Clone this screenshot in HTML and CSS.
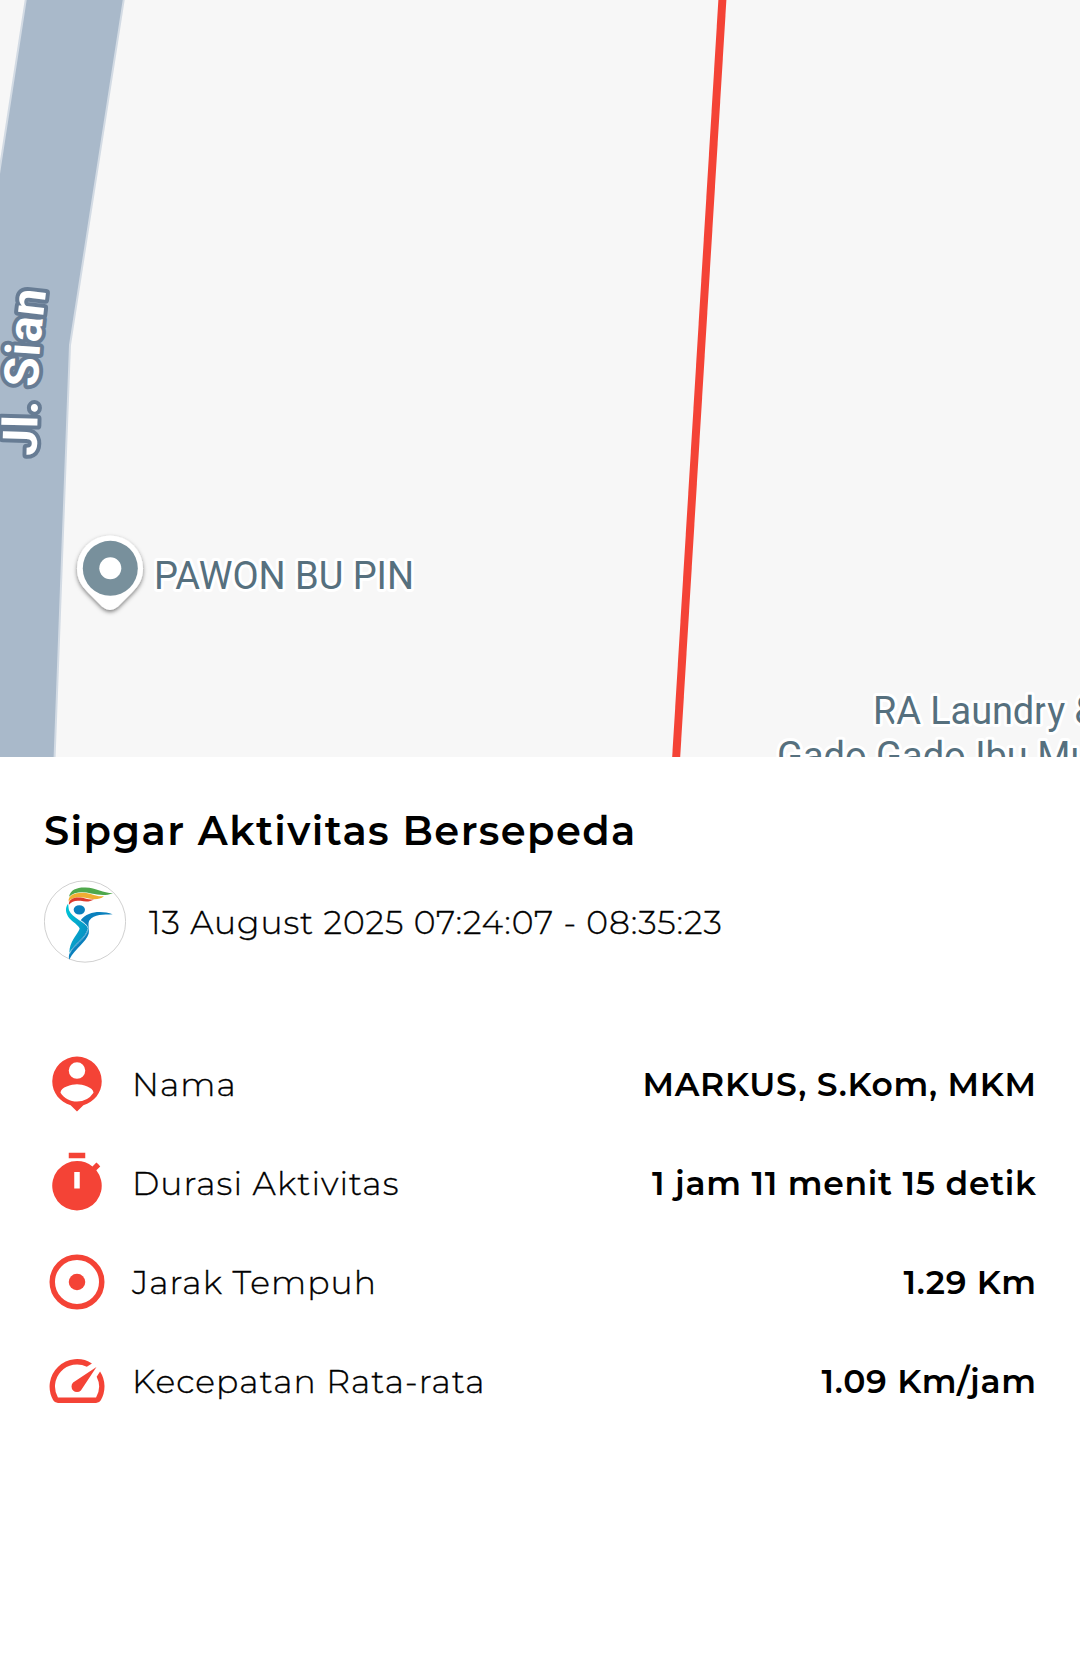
FILE: index.html
```html
<!DOCTYPE html>
<html lang="id">
  <head>
    <meta charset="UTF-8" />
    <meta name="viewport" content="width=device-width, initial-scale=1.0" />
    <title>Sipgar Aktivitas Bersepeda</title>
    <link rel="stylesheet" href="styles.css">
  </head>
  <body>
    <svg class="map" viewBox="0 0 1080 757">
      <defs>
        <path id="streetPath" d="M36.500 456 L38.500 375 Q39.500 345 43 318 L49 268" />
        <filter id="pinShadow" x="-20%" y="-20%" width="140%" height="150%">
          <feDropShadow dx="0" dy="2" stdDeviation="2" flood-opacity="0.5" />
        </filter>
      </defs>
      <path class="road" d="M26 -2 L-3 187 V760 H54.500 L70 345 L124 -2 Z" />
      <path class="route" d="M722.500 -2 L676 760" />
      <text class="street"><textPath href="#streetPath" textLength="166">Jl. Sian</textPath></text>
      <path class="pin" filter="url(#pinShadow)" d="M110 535.500a33 33 0 0 0-33 33c0 10 4 17 11 24l14 14q8 7 16 0l14-14c7-7 11-14 11-24a33 33 0 0 0-33-33z" />
      <circle class="pin-ring" cx="110.300" cy="568.300" r="27.500" />
      <circle class="pin" cx="110.300" cy="568.300" r="11" />
      <text class="place" x="154" y="588.500" textLength="260">PAWON BU PIN</text>
      <text class="place" x="873" y="723.500" textLength="225">RA Laundry &amp;</text>
      <text class="place" x="777" y="768.500">Gado Gado Ibu Mul</text>
    </svg>

    <div class="detail">
      <h1>Sipgar Aktivitas Bersepeda</h1>
      <div class="date-row">
        <svg class="logo" viewBox="27 29 246 248">
          <defs>
            <linearGradient id="bodyBlue" x1="0" y1="0" x2="1" y2="1">
              <stop offset="0" stop-color="#00c8d8" />
              <stop offset="1" stop-color="#0a80bd" />
            </linearGradient>
          </defs>
          <circle cx="150" cy="153" r="122" fill="#fff" stroke="#b0b0b0" stroke-width="1.800" />
          <path fill="#4fa84c" d="M102 79C106 57 128 50 151 51C185 52 203 68 234 68C209 77 192 73 169 69C143 63 117 64 102 79Z" />
          <path fill="#f0ae32" d="M101 93C99 74 121 66 145 67C172 69 182 80 207 77C190 90 172 86 151 82C130 78 110 80 101 93Z" />
          <path fill="#dc3a2d" d="M102 103C99 87 116 79 136 81C154 83 160 89 178 86C164 95 150 93 137 91C121 89 110 92 102 103Z" />
          <ellipse cx="133" cy="118" rx="17" ry="14" fill="#0a80bd" />
          <path fill="url(#bodyBlue)" d="M99 100C89 113 92 130 103 143C112 154 132 164 134 175C126 195 103 213 103 247C118 218 151 203 159 173C153 154 111 143 102 119C100 112 101 105 99 100Z" />
          <path fill="#0a80bd" d="M137 149C158 120 202 120 233 131C205 133 178 129 163 150C157 161 164 176 161 190C153 216 122 232 103 267C99 256 105 244 111 235C125 215 152 200 159 173C157 163 147 156 137 149Z" />
          <path fill="none" stroke="#c8eaf4" stroke-width="1.500" d="M104 250C112 225 154 207 160 174C158 165 147 156 139 150" />
        </svg>
        <span class="date">13 August 2025 07:24:07 - 08:35:23</span>
      </div>

      <ul class="stats">
        <li>
          <svg class="icon" viewBox="0 0 24 24">
            <path fill-rule="evenodd" d="M12 2a9 9 0 0 0-9 9c0 4.170 2.840 7.670 6.690 8.690L12 22l2.310-2.310C18.160 18.670 21 15.170 21 11a9 9 0 0 0-9-9zm0 2.130a3 3 0 1 1 0 6 3 3 0 0 1 0-6zM12 18.400c-2.500 0-4.700-1.280-6-3.220.03-2 4-3.080 6-3.080s5.970 1.090 6 3.080a7.200 7.200 0 0 1-6 3.220z" />
          </svg>
          <span class="label">Nama</span>
          <span class="value">MARKUS, S.Kom, MKM</span>
        </li>
        <li>
          <svg class="icon" viewBox="0 0 24 24">
            <path d="M9 1h6v2H9zM19.030 7.390l1.420-1.420c-.43-.51-.9-.99-1.410-1.410l-1.420 1.420A8.960 8.960 0 0 0 12 4a9 9 0 1 0 7.030 3.390zM13 14h-2V8h2v6z" />
          </svg>
          <span class="label">Durasi Aktivitas</span>
          <span class="value">1 jam 11 menit 15 detik</span>
        </li>
        <li>
          <svg class="icon" viewBox="0 0 24 24">
            <circle cx="12" cy="12" r="9" fill="none" stroke="#f44336" stroke-width="2" />
            <circle cx="12" cy="12" r="3" />
          </svg>
          <span class="label">Jarak Tempuh</span>
          <span class="value">1.29 Km</span>
        </li>
        <li>
          <svg class="icon" viewBox="0 0 24 24">
            <path d="M20.380 8.570l-1.230 1.850a8 8 0 0 1-.22 7.580H5.070A8 8 0 0 1 15.580 6.850l1.850-1.230A10 10 0 0 0 3.350 19a2 2 0 0 0 1.720 1h13.850a2 2 0 0 0 1.740-1 10 10 0 0 0-.27-10.440zm-9.790 6.840a2 2 0 0 0 2.830 0l5.660-8.490-8.490 5.660a2 2 0 0 0 0 2.830z" />
          </svg>
          <span class="label">Kecepatan Rata-rata</span>
          <span class="value">1.09 Km/jam</span>
        </li>
      </ul>
    </div>
  </body>
</html>
```
FILE: styles.css
```css
* {
  margin: 0;
  padding: 0;
  box-sizing: border-box;
}
body {
  width: 1080px;
  min-height: 1670px;
  background: #fff;
  color: #000;
  font-family: Montserrat, Inter, sans-serif;
  overflow-x: hidden;
}

/* map */
.map {
  display: block;
  width: 1080px;
  height: 757px;
  background: #f7f7f7;
  overflow: hidden;
}
.road {
  fill: #a9b9ca;
  stroke: #d3dbe4;
  stroke-width: 2;
}
.route {
  fill: none;
  stroke: #f44336;
  stroke-width: 8;
}
.street {
  font-family: Roboto, sans-serif;
  font-size: 48px;
  font-weight: 700;
  fill: #fff;
  stroke: #677c94;
  stroke-width: 8;
  stroke-linejoin: round;
  paint-order: stroke;
}
.place {
  font-family: Roboto, sans-serif;
  font-size: 38px;
  fill: #56707e;
  stroke: #fff;
  stroke-width: 6;
  stroke-linejoin: round;
  paint-order: stroke;
}
.pin {
  fill: #fff;
}
.pin-ring {
  fill: #78909c;
}

/* detail */
.detail {
  padding: 48px 44px 0;
}
h1 {
  font-size: 40px;
  font-weight: 600;
  line-height: 52px;
  letter-spacing: 1.4px;
  white-space: nowrap;
}
.date-row {
  display: flex;
  align-items: center;
  gap: 23px;
  margin-top: 23px;
  height: 82px;
}
.logo {
  width: 82px;
  height: 83px;
}
.date {
  padding-top: 1px;
  font-size: 33px;
  font-weight: 300;
  letter-spacing: 0.9px;
  -webkit-text-stroke: 0.35px #000;
  white-space: nowrap;
}
.stats {
  list-style: none;
  margin-top: 89px;
}
.stats li {
  display: flex;
  align-items: center;
  height: 66px;
  margin-bottom: 33px;
}
.icon {
  width: 66px;
  height: 66px;
  fill: #f44336;
}
.label {
  margin-left: 22px;
  font-size: 33px;
  font-weight: 300;
  letter-spacing: 1.06px;
  -webkit-text-stroke: 0.35px #000;
}
.value {
  margin-left: auto;
  margin-right: -0.7px;
  font-size: 33px;
  font-weight: 600;
  letter-spacing: 0.69px;
}
```
